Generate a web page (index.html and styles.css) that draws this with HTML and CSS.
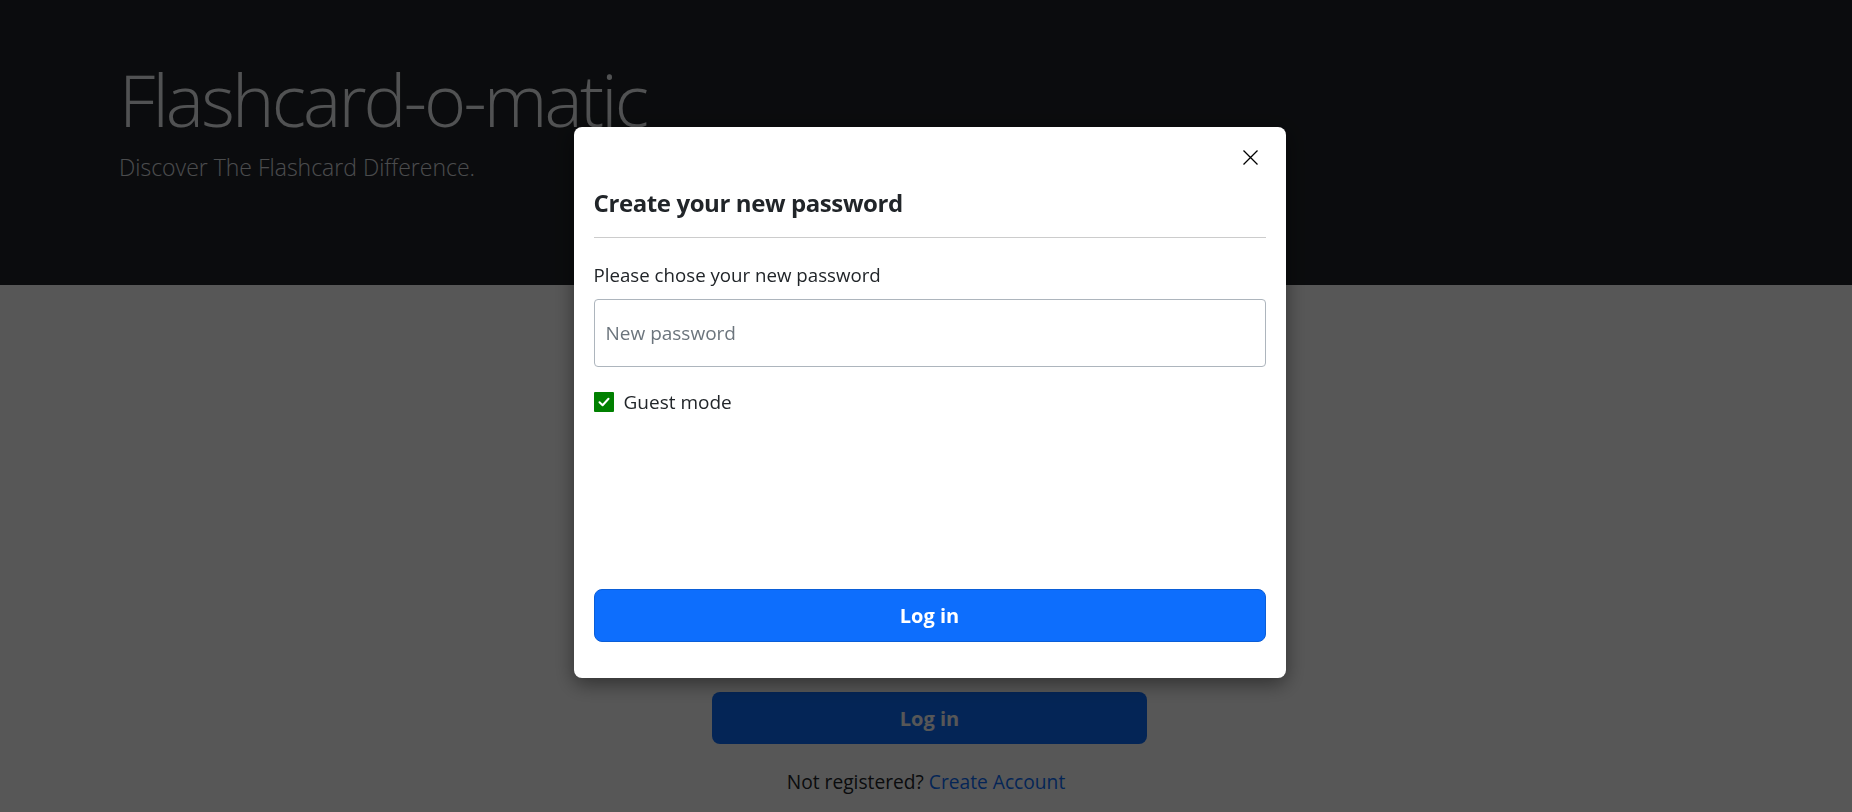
FILE: index.html
```html
<!DOCTYPE html>
<html lang="en">
<head>
<meta charset="utf-8">
<title>Flashcard-o-matic</title>
<link rel="stylesheet" href="styles.css">
</head>
<body>
<header class="hero">
  <h1 class="hero-title">Flashcard-o-matic</h1>
  <p class="hero-lead">Discover The Flashcard Difference.</p>
</header>
<main class="login">
  <form class="login-form">
    <h2 class="login-heading">Log in</h2>
    <div class="login-field">
      <label class="login-label">Username</label>
      <input class="login-input" type="text" placeholder="Username">
    </div>
    <div class="login-field">
      <label class="login-label">Password</label>
      <input class="login-input" type="password" placeholder="Password">
    </div>
    <div class="login-remember">Remember me</div>
    <button type="button" class="login-btn">Log in</button>
  </form>
  <p class="register">Not registered? <a class="register-link" href="#">Create Account</a></p>
</main>
<div class="backdrop"></div>
<div class="modal">
  <div class="modal-dialog">
    <div class="modal-top">
      <button type="button" class="modal-close" aria-label="Close">
        <svg width="15" height="15" viewBox="0 0 15 15"><path d="M0.5 0.5 L14.5 14.5 M14.5 0.5 L0.5 14.5" stroke="#000" stroke-width="1.3" fill="none"/></svg>
      </button>
    </div>
    <h4 class="modal-title">Create your new password</h4>
    <label class="modal-label">Please chose your new password</label>
    <input class="modal-input" type="password" placeholder="New password">
    <label class="modal-check">
      <span class="checkbox"><svg width="20" height="20" viewBox="0 0 20 20"><path d="M5.5 10.2 L8.6 13.2 L14.5 6.8" stroke="#fff" stroke-width="2" fill="none" stroke-linecap="round" stroke-linejoin="round"/></svg></span>
      <span class="check-text">Guest mode</span>
    </label>
    <button type="button" class="modal-btn">Log in</button>
  </div>
</div>
</body>
</html>
```

FILE: styles.css
```css
* { box-sizing: border-box; }
html, body { margin: 0; padding: 0; }
body {
  font-family: "Open Sans", "Noto Sans", sans-serif;
  color: #212529;
  background: #ffffff;
  height: 812px;
  overflow: hidden;
}
.hero {
  height: 285px;
  background: #212529;
  padding: 56px 0 0 119px;
}
.hero-title {
  margin: 0;
  font-size: 72px;
  font-weight: 300;
  line-height: 86px;
  letter-spacing: -2.8px;
  color: #eceff2;
}
.hero-lead {
  margin: 10px 0 0;
  font-size: 23px;
  font-weight: 300;
  line-height: 30px;
  color: #dcdfe2;
}
.login {
  display: flex;
  flex-direction: column;
  align-items: center;
  padding-top: 60px;
}
.login-form {
  width: 435px;
  margin-left: 7px;
  display: flex;
  flex-direction: column;
}
.login-heading {
  margin: 0 0 32px;
  font-size: 32px;
  line-height: 40px;
}
.login-field { display: flex; flex-direction: column; margin-bottom: 24px; }
.login-label { font-size: 18px; line-height: 30px; }
.login-input { height: 58px; border: 1px solid #ced4da; border-radius: 6px; font-size: 18px; padding: 0 12px; }
.login-remember { height: 27px; margin-bottom: 24px; font-size: 18px; }
.login-btn {
  height: 52px;
  border: none;
  border-radius: 8px;
  background: #0d6efd;
  color: #ffffff;
  font-family: inherit;
  font-size: 20px;
  font-weight: 700;
}
.register {
  margin: 23px 0 0;
  font-size: 19.2px;
  line-height: 30px;
}
.register-link { color: #0d6efd; text-decoration: none; }
.backdrop {
  position: fixed;
  inset: 0;
  background: rgba(0, 0, 0, 0.66);
}
.modal {
  position: fixed;
  inset: 0;
  display: flex;
  justify-content: center;
  align-items: flex-start;
  padding: 127px 0 0 7px;
}
.modal-dialog {
  width: 712px;
  background: #ffffff;
  border-radius: 8px;
  box-shadow: 0 6px 20px rgba(0, 0, 0, 0.45);
  padding: 0 20px 36px;
  display: flex;
  flex-direction: column;
}
.modal-top {
  height: 61px;
  display: flex;
  justify-content: flex-end;
  align-items: flex-start;
}
.modal-close {
  margin: 23px 8px 0 0;
  padding: 0;
  border: none;
  background: none;
  width: 15px;
  height: 15px;
  display: flex;
}
.modal-title {
  margin: 0;
  font-size: 24px;
  font-weight: 700;
  line-height: 29px;
  letter-spacing: -0.4px;
  padding-bottom: 20px;
  border-bottom: 1px solid #cccccc;
}
.modal-label {
  display: block;
  margin-top: 23px;
  font-size: 18.7px;
  line-height: 27px;
}
.modal-input {
  display: block;
  width: 100%;
  height: 68px;
  margin-top: 11px;
  border: 1px solid #adb5bd;
  border-radius: 4px;
  padding: 0 11px;
  font-family: inherit;
  font-size: 19px;
  color: #212529;
}
.modal-input::placeholder { color: #6c757d; }
.modal-check {
  display: flex;
  align-items: center;
  gap: 10px;
  margin-top: 25px;
  height: 20px;
}
.checkbox {
  width: 20px;
  height: 20px;
  background: #008000;
  border-radius: 1px;
  display: flex;
}
.check-text { font-size: 19px; line-height: 27px; }
.modal-btn {
  margin-top: 177px;
  height: 53px;
  width: 100%;
  border: 1px solid #0b5ed7;
  border-radius: 8px;
  background: #0d6efd;
  color: #ffffff;
  font-family: inherit;
  font-size: 20px;
  font-weight: 700;
}
```
